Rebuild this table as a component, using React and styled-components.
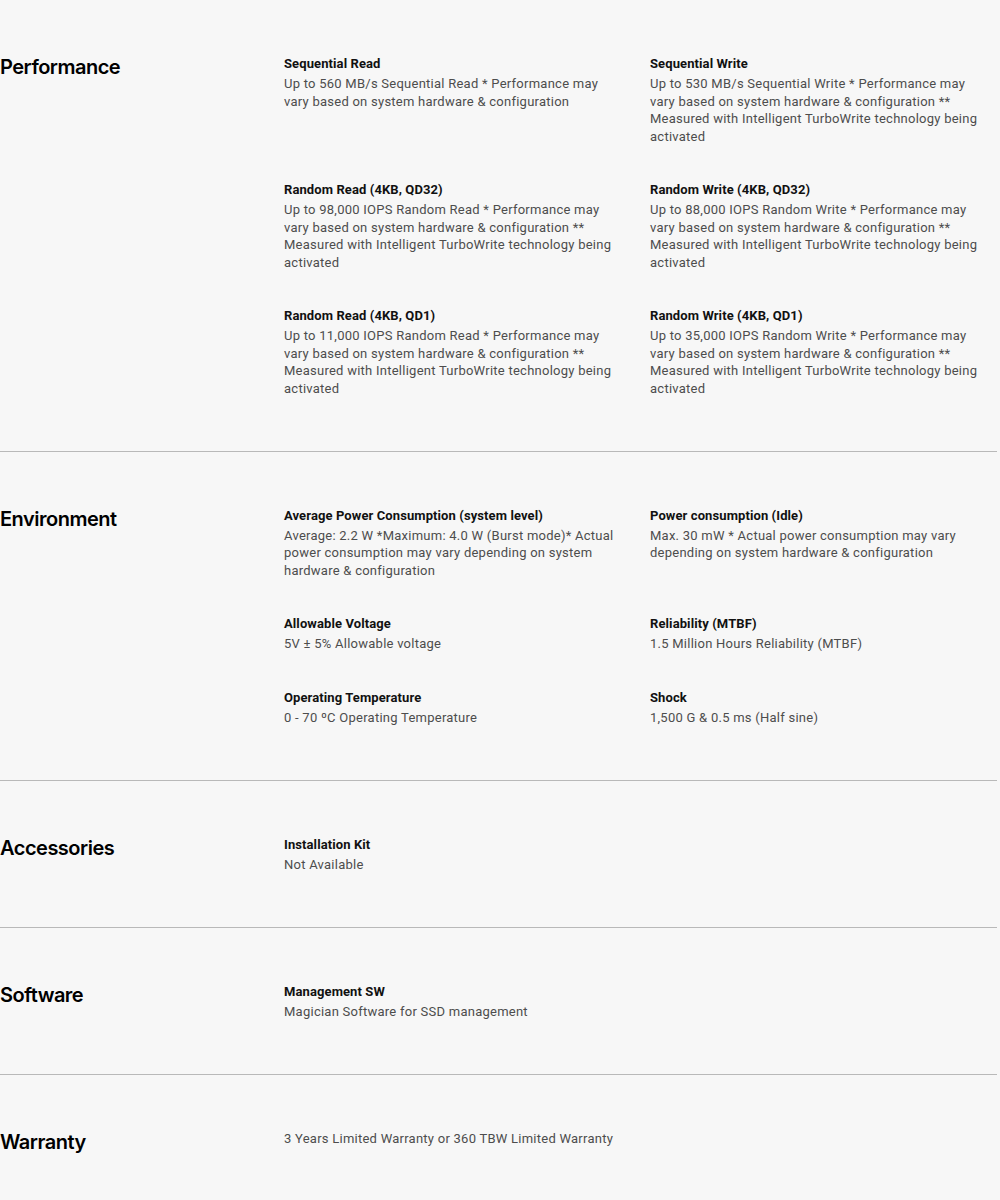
import React from 'react';
import styled, { createGlobalStyle } from 'styled-components';

const GlobalStyle = createGlobalStyle`
  html, body {
    margin: 0;
    padding: 0;
    background: #f7f7f7;
  }
  body {
    font-family: Roboto, "Liberation Sans", sans-serif;
    -webkit-font-smoothing: antialiased;
  }
`;

const Page = styled.div`
  width: 997px;
  background: #f7f7f7;
`;

const Section = styled.section`
  display: grid;
  grid-template-columns: 284px 1fr;
  padding: 55px 0 53.5px;
  border-bottom: 1px solid #b9b9b9;

  &:last-child {
    border-bottom: none;
  }
`;

const SectionTitle = styled.h2`
  margin: 0;
  font-family: Inter, "Liberation Sans", sans-serif;
  font-size: 20px;
  font-weight: 600;
  letter-spacing: -0.5px;
  line-height: 24px;
  color: #000;
`;

const ItemGrid = styled.div`
  display: grid;
  grid-template-columns: 330px 330px;
  column-gap: 36px;
  row-gap: 36px;
`;

const Item = styled.div`
  display: flex;
  flex-direction: column;
`;

const ItemTitle = styled.h3`
  margin: 0 0 2px;
  font-size: 13px;
  font-weight: 700;
  letter-spacing: 0.1px;
  line-height: 18px;
  color: #111;
`;

const ItemText = styled.p`
  margin: 0;
  font-size: 13px;
  font-weight: 400;
  letter-spacing: 0.25px;
  line-height: 17.5px;
  color: #4d4d4d;
`;

const specs = [
  {
    title: 'Performance',
    items: [
      ['Sequential Read', 'Up to 560 MB/s Sequential Read * Performance may vary based on system hardware & configuration'],
      ['Sequential Write', 'Up to 530 MB/s Sequential Write * Performance may vary based on system hardware & configuration ** Measured with Intelligent TurboWrite technology being activated'],
      ['Random Read (4KB, QD32)', 'Up to 98,000 IOPS Random Read * Performance may vary based on system hardware & configuration ** Measured with Intelligent TurboWrite technology being activated'],
      ['Random Write (4KB, QD32)', 'Up to 88,000 IOPS Random Write * Performance may vary based on system hardware & configuration ** Measured with Intelligent TurboWrite technology being activated'],
      ['Random Read (4KB, QD1)', 'Up to 11,000 IOPS Random Read * Performance may vary based on system hardware & configuration ** Measured with Intelligent TurboWrite technology being activated'],
      ['Random Write (4KB, QD1)', 'Up to 35,000 IOPS Random Write * Performance may vary based on system hardware & configuration ** Measured with Intelligent TurboWrite technology being activated'],
    ],
  },
  {
    title: 'Environment',
    items: [
      ['Average Power Consumption (system level)', 'Average: 2.2 W *Maximum: 4.0 W (Burst mode)* Actual power consumption may vary depending on system hardware & configuration'],
      ['Power consumption (Idle)', 'Max. 30 mW * Actual power consumption may vary depending on system hardware & configuration'],
      ['Allowable Voltage', '5V ± 5% Allowable voltage'],
      ['Reliability (MTBF)', '1.5 Million Hours Reliability (MTBF)'],
      ['Operating Temperature', '0 - 70 ºC Operating Temperature'],
      ['Shock', '1,500 G & 0.5 ms (Half sine)'],
    ],
  },
  {
    title: 'Accessories',
    items: [['Installation Kit', 'Not Available']],
  },
  {
    title: 'Software',
    items: [['Management SW', 'Magician Software for SSD management']],
  },
  {
    title: 'Warranty',
    items: [[null, '3 Years Limited Warranty or 360 TBW Limited Warranty']],
  },
];

export default function App() {
  return (
    <>
      <GlobalStyle />
      <Page>
        {specs.map((section) => (
          <Section key={section.title}>
            <SectionTitle>{section.title}</SectionTitle>
            <ItemGrid>
              {section.items.map(([title, text], i) => (
                <Item key={i}>
                  {title && <ItemTitle>{title}</ItemTitle>}
                  <ItemText>{text}</ItemText>
                </Item>
              ))}
            </ItemGrid>
          </Section>
        ))}
      </Page>
    </>
  );
}
